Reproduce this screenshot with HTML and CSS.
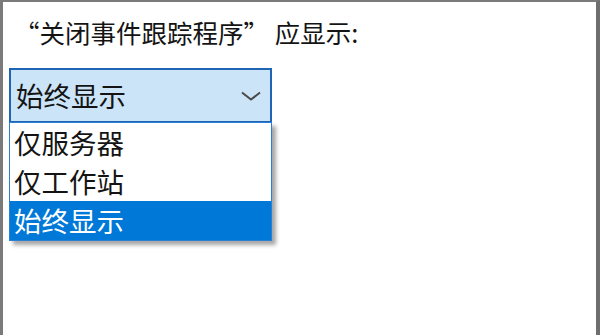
FILE: index.html
```html
<!DOCTYPE html>
<html lang="zh-CN">
<head>
<meta charset="utf-8">
<link rel="stylesheet" href="styles.css">
</head>
<body>
<div class="frame">
  <div class="label">“关闭事件跟踪程序” 应显示:</div>
  <div class="combo-wrap">
    <div class="combo">
      <span class="combo-text">始终显示</span>
      <svg class="chev" width="20" height="10" viewBox="0 0 20 10"><path d="M1 1.5 L10 8.5 L19 1.5" fill="none" stroke="#4a4a4a" stroke-width="2"/></svg>
    </div>
    <ul class="list">
      <li class="item">仅服务器</li>
      <li class="item">仅工作站</li>
      <li class="item selected">始终显示</li>
    </ul>
  </div>
</div>
</body>
</html>
```

FILE: styles.css
```css
html, body {
  margin: 0;
  padding: 0;
  background: #ffffff;
}
.frame {
  box-sizing: border-box;
  width: 600px;
  height: 335px;
  border-top: 2px solid #7a7a7a;
  border-left: 3px solid #7a7a7a;
  border-right: 4px solid #6e6e6e;
  background: #ffffff;
  font-family: "Noto Sans CJK SC", "Noto Sans", sans-serif;
  color: #141414;
  padding-top: 14px;
}
.label {
  font-size: 25.5px;
  line-height: 32px;
  padding-left: 11px;
  letter-spacing: 0;
}
.combo-wrap {
  position: relative;
  margin-top: 20px;
  margin-left: 6px;
  width: 263px;
}
.combo {
  box-sizing: border-box;
  height: 55px;
  border: 2px solid #1f65b4;
  background: #cce4f7;
  display: flex;
  align-items: center;
  justify-content: space-between;
  padding: 0 9px 0 5px;
}
.combo-text {
  font-size: 27.5px;
  line-height: 30px;
  margin-top: -2px;
}
.chev {
  display: block;
}
.list {
  position: absolute;
  left: 0;
  top: 54px;
  width: 263px;
  box-sizing: border-box;
  margin: 0;
  padding: 0;
  list-style: none;
  background: #ffffff;
  border: 1px solid #2b7fd4;
  box-shadow: 4px 4px 4px rgba(0, 0, 0, 0.35);
}
.item {
  height: 39px;
  line-height: 39px;
  font-size: 27.5px;
  padding-left: 4px;
}
.item.selected {
  background: #0078d7;
  color: #ffffff;
}
```
